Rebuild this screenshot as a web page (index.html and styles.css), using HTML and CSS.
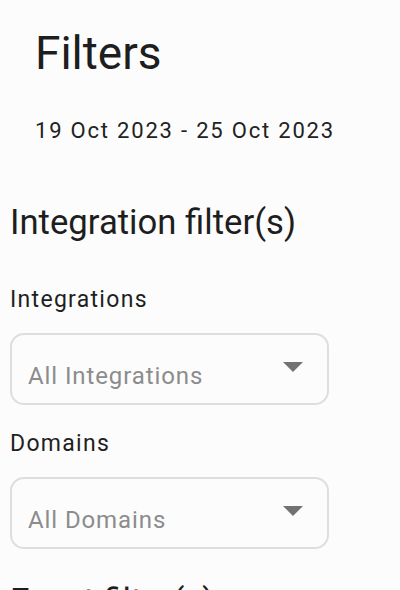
FILE: index.html
```html
<!DOCTYPE html>
<html lang="en">
<head>
<meta charset="utf-8">
<title>Filters</title>
<link rel="stylesheet" href="styles.css">
</head>
<body>
<div class="panel">
  <header class="panel-header">
    <h1 class="title">Filters</h1>
    <p class="date-range">19 Oct 2023 - 25 Oct 2023</p>
  </header>

  <section class="filter-group">
    <h2 class="group-title">Integration filter(s)</h2>
    <div class="field">
      <label class="field-label">Integrations</label>
      <div class="select">
        <span class="placeholder">All Integrations</span>
        <svg class="caret" width="20" height="10" viewBox="0 0 20 10"><path d="M0 0H20L10 10Z" fill="#727272"/></svg>
      </div>
    </div>
    <div class="field">
      <label class="field-label">Domains</label>
      <div class="select">
        <span class="placeholder">All Domains</span>
        <svg class="caret" width="20" height="10" viewBox="0 0 20 10"><path d="M0 0H20L10 10Z" fill="#727272"/></svg>
      </div>
    </div>
  </section>

  <section class="filter-group next">
    <h2 class="group-title">Event filter(s)</h2>
  </section>
</div>
</body>
</html>
```

FILE: styles.css
```css
html, body {
  margin: 0;
  padding: 0;
  background: #fcfcfc;
}

body {
  font-family: Roboto, "Liberation Sans", sans-serif;
  color: #1f1f1f;
  overflow: hidden;
}

.panel {
  padding: 27px 10px 0 10px;
  width: 400px;
  box-sizing: border-box;
}

.panel-header {
  padding-left: 25px;
}

.title {
  margin: 0;
  font-size: 46px;
  line-height: 52px;
  font-weight: 400;
  color: #1e1e1e;
}

.date-range {
  margin: 40px 0 0 0;
  font-size: 22px;
  line-height: 24px;
  letter-spacing: 1.8px;
  color: #222;
}

.filter-group {
  margin-top: 58px;
}

.filter-group.next {
  margin-top: 31px;
}

.group-title {
  margin: 0;
  font-size: 34.7px;
  line-height: 42px;
  font-weight: 400;
  color: #1e1e1e;
}

.field {
  display: flex;
  flex-direction: column;
  gap: 20px;
  margin-top: 26px;
}

.filter-group .field:first-of-type {
  margin-top: 44px;
}

.field-label {
  font-size: 23px;
  line-height: 26px;
  letter-spacing: 1.3px;
  color: #1f1f1f;
}

.select {
  width: 319px;
  height: 72px;
  box-sizing: border-box;
  border: 2px solid #dedede;
  border-radius: 14px;
  display: flex;
  align-items: center;
  justify-content: space-between;
  padding: 0 24px 0 16px;
  background: #fcfcfc;
}

.placeholder {
  font-size: 24px;
  letter-spacing: 0.9px;
  color: #8c8c8c;
  margin-top: 14px;
}

.caret {
  margin-bottom: 4px;
}
```
